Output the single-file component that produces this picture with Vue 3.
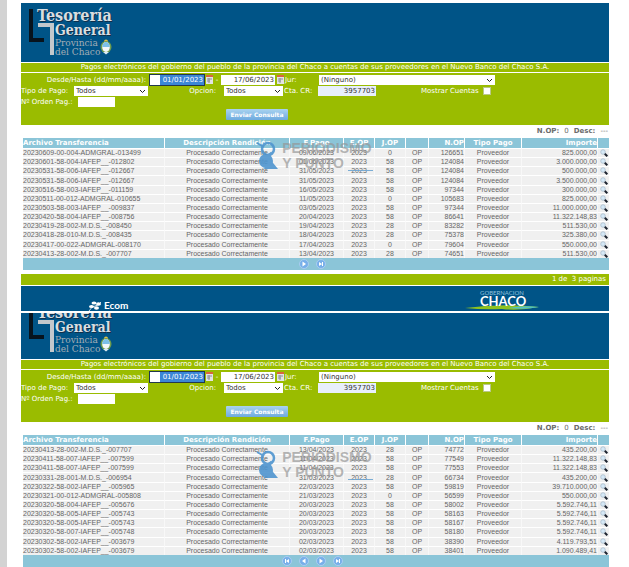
<template>
  <div class="page">
    <main class="content">
      <section v-for="panel in panels" :key="panel.id" class="panel">
        <header class="banner" :class="{ 'banner-cut': panel.cut }">
          <svg class="logo" width="100" height="59" viewBox="0 0 100 59">
            <path d="M10 6V37H23" class="logo-dark" />
            <path d="M17 22H31V52" class="logo-light" />
            <text x="17" y="19" class="logo-shadow logo-top">Tesorería</text>
            <text x="16" y="18" class="logo-name logo-top">Tesorería</text>
            <text x="35" y="33" class="logo-shadow logo-big">General</text>
            <text x="34" y="32" class="logo-name logo-big">General</text>
            <text x="34" y="43" class="logo-small">Provincia</text>
            <text x="34" y="52" class="logo-small">del Chaco</text>
            <circle cx="85" cy="38.500" r="2" fill="#e0c04a" />
            <ellipse cx="85" cy="44" rx="5.500" ry="6" fill="#6f9c4d" />
            <ellipse cx="85" cy="44" rx="3.800" ry="5" fill="#f4f8fa" />
            <path d="M81.200 44a3.800 5 0 0 1 7.600 0z" fill="#7cc0e8" />
            <path d="M82 49l3 2.500 3-2.500z" fill="#dcebf2" />
          </svg>
        </header>

        <h1 class="title">
          Pagos electrónicos del gobierno del pueblo de la provincia del Chaco a cuentas de sus proveedores en el Nuevo Banco del Chaco S.A.
        </h1>

        <form class="filters" @submit.prevent>
          <div class="line">
            <label class="lbl-dates" :for="panel.id + '-desde'">Desde/Hasta (dd/mm/aaaa):</label>
            <input :id="panel.id + '-desde'" class="field date selected" type="text" value="01/01/2023">
            <svg class="calendar" width="7" height="9" viewBox="0 0 7 9">
              <rect y="1" width="7" height="8" fill="#e3e3e3" />
              <rect width="7" height="2" fill="#d8663c" />
              <path d="M1 4h5M1 6h3M3 3v5" stroke="#8b9098" fill="none" />
            </svg>
            <span class="dash">-</span>
            <input class="field date" type="text" value="17/06/2023" aria-label="Hasta">
            <svg class="calendar" width="7" height="9" viewBox="0 0 7 9">
              <rect y="1" width="7" height="8" fill="#e3e3e3" />
              <rect width="7" height="2" fill="#d8663c" />
              <path d="M1 4h5M1 6h3M3 3v5" stroke="#8b9098" fill="none" />
            </svg>
            <label class="lbl-jur" :for="panel.id + '-jur'">Jur:</label>
            <span class="select select-jur">
              <select :id="panel.id + '-jur'"><option>(Ninguno)</option></select>
              <svg class="chevron" width="7" height="5" viewBox="0 0 7 5"><path d="M1 1l2.500 2.500L6 1" /></svg>
            </span>
          </div>
          <div class="line">
            <label class="lbl-tipo" :for="panel.id + '-tipo'">Tipo de Pago:</label>
            <span class="select select-tipo">
              <select :id="panel.id + '-tipo'"><option>Todos</option></select>
              <svg class="chevron" width="7" height="5" viewBox="0 0 7 5"><path d="M1 1l2.500 2.500L6 1" /></svg>
            </span>
            <label class="lbl-opcion" :for="panel.id + '-opcion'">Opcion:</label>
            <span class="select select-opcion">
              <select :id="panel.id + '-opcion'"><option>Todos</option></select>
              <svg class="chevron" width="7" height="5" viewBox="0 0 7 5"><path d="M1 1l2.500 2.500L6 1" /></svg>
            </span>
            <label class="lbl-cta" :for="panel.id + '-cta'">Cta. CR:</label>
            <input :id="panel.id + '-cta'" class="field account" type="text" value="3957703">
            <label class="lbl-mostrar" :for="panel.id + '-mostrar'">Mostrar Cuentas</label>
            <input :id="panel.id + '-mostrar'" class="check" type="checkbox">
          </div>
          <div class="line">
            <label class="lbl-orden" :for="panel.id + '-orden'">Nº Orden Pag.:</label>
            <input :id="panel.id + '-orden'" class="field orden" type="text">
          </div>
          <button class="send" type="submit">Enviar Consulta</button>
        </form>

        <div class="status">
          <b>N.OP:</b><span>0</span><b>Desc:</b><span>---</span>
        </div>

        <div class="results">
          <table>
            <colgroup>
              <col v-for="c in columns" :key="c.key" :class="'col-' + c.key">
            </colgroup>
            <thead>
              <tr>
                <th v-for="c in columns" :key="c.key" :class="c.align">{{ c.label }}</th>
              </tr>
            </thead>
            <tbody>
              <tr v-for="(row, i) in panel.rows" :key="i">
                <td>{{ row[0] }}</td>
                <td class="center">Procesado Correctamente</td>
                <td class="center">{{ row[1] }}</td>
                <td class="center">2023</td>
                <td class="center">{{ row[2] }}</td>
                <td class="center">OP</td>
                <td class="right">{{ row[3] }}</td>
                <td class="center">Proveedor</td>
                <td class="right">{{ row[4] }}</td>
                <td class="center">
                  <svg class="lens" width="8" height="8" viewBox="0 0 8 8">
                    <circle cx="3" cy="3" r="2.300" fill="#d5e8f6" stroke="#a9bccb" stroke-width=".8" />
                    <path d="M4.800 4.800L7.300 7.300" stroke="#1d2430" stroke-width="2" />
                  </svg>
                </td>
              </tr>
            </tbody>
            <tfoot>
              <tr>
                <td colspan="10">
                  <div class="pager">
                    <button v-for="name in panel.pager" :key="name" type="button" :aria-label="name">
                      <svg width="10" height="10" viewBox="0 0 10 10">
                        <circle cx="5" cy="5" r="4.500" fill="#78afe9" stroke="#a9cdf0" />
                        <path :d="pagerIcons[name]" fill="#fff" />
                      </svg>
                    </button>
                  </div>
                </td>
              </tr>
            </tfoot>
          </table>

          <div class="watermark" :class="{ 'watermark-low': panel.cut }">
            <svg width="22" height="29" viewBox="0 0 22 29">
              <path d="M1 2L8 6" stroke="#4f95cf" stroke-width="2" />
              <circle cx="12" cy="8" r="6" fill="none" stroke="#4f95cf" stroke-width="2.500" />
              <path d="M16 12L6 19" stroke="#4f95cf" stroke-width="3" />
              <circle cx="10" cy="20" r="7" fill="#4f95cf" />
              <path d="M13 17l9 11h-14z" fill="#4f95cf" />
            </svg>
            <div class="watermark-text">
              <span>PERIODISMO</span>
              <span class="second">Y PUNTO<i></i></span>
            </div>
          </div>
        </div>

        <template v-if="panel.footer">
          <div class="pages">1 de&nbsp; 3 paginas</div>
          <footer class="footer">
            <svg class="ecom" width="44" height="11" viewBox="0 0 44 11">
              <g fill="#fff">
                <ellipse cx="6" cy="3" rx="2.500" ry="1.500" />
                <ellipse cx="10.500" cy="4" rx="2.500" ry="1.800" />
                <ellipse cx="3.500" cy="6.500" rx="2.500" ry="1.600" />
                <ellipse cx="8.500" cy="8" rx="2.500" ry="1.800" />
              </g>
              <path d="M1 11q3-5 6-5t6-4" fill="none" stroke="#fff" stroke-width=".8" />
              <text x="16" y="9">Ecom</text>
            </svg>
            <svg class="chaco" width="76" height="21" viewBox="0 0 76 21">
              <path d="M1 18Q38 13 75 17Q55 21 38 19Q20 20 1 18z" fill="#8fc31f" />
              <path d="M44 18Q60 15 75 17Q62 20 44 18z" fill="#4fc0c8" />
              <text x="16" y="5" class="gov">GOBERNACION</text>
              <text x="16" y="16" class="name">CHACO</text>
            </svg>
          </footer>
        </template>
      </section>
    </main>
  </div>
</template>

<script setup>
const columns = [
  { key: 'archivo', label: 'Archivo Transferencia', align: 'left' },
  { key: 'desc', label: 'Descripción Rendición', align: 'center' },
  { key: 'fecha', label: 'F.Pago', align: 'center' },
  { key: 'eop', label: 'E.OP', align: 'center' },
  { key: 'jop', label: 'J.OP', align: 'center' },
  { key: 'tipo', label: '', align: 'center' },
  { key: 'nop', label: 'N.OP', align: 'right' },
  { key: 'pago', label: 'Tipo Pago', align: 'center' },
  { key: 'importe', label: 'Importe', align: 'right' },
  { key: 'ver', label: '', align: 'center' },
]

const pagerIcons = {
  Primera: 'M3 3h1v4H3zM7 3v4L4 5z',
  Anterior: 'M6.500 2.500v5L3 5z',
  Siguiente: 'M3.500 2.500v5L7 5z',
  Última: 'M6 3h1v4H6zM3 3v4l3-2z',
}

// archivo, fecha de pago, J.OP, N.OP, importe
const panels = [
  {
    id: 'p1',
    cut: false,
    footer: true,
    pager: ['Siguiente', 'Última'],
    rows: [
      ['20230609-00-004-ADMGRAL-013499', '09/06/2023', '0', '126651', '825.000,00'],
      ['20230601-58-004-IAFEP__-012802', '01/06/2023', '58', '124084', '3.000.000,00'],
      ['20230531-58-006-IAFEP__-012667', '31/05/2023', '58', '124084', '500.000,00'],
      ['20230531-58-006-IAFEP__-012667', '31/05/2023', '58', '124084', '3.500.000,00'],
      ['20230516-58-003-IAFEP__-011159', '16/05/2023', '58', '97344', '300.000,00'],
      ['20230511-00-012-ADMGRAL-010655', '11/05/2023', '0', '105683', '825.000,00'],
      ['20230503-58-003-IAFEP__-009837', '03/05/2023', '58', '97344', '11.000.000,00'],
      ['20230420-58-004-IAFEP__-008756', '20/04/2023', '58', '86641', '11.322.148,83'],
      ['20230419-28-002-M.D.S._-008450', '19/04/2023', '28', '83282', '511.530,00'],
      ['20230418-28-010-M.D.S._-008435', '18/04/2023', '28', '75378', '325.380,00'],
      ['20230417-00-022-ADMGRAL-008170', '17/04/2023', '0', '79604', '550.000,00'],
      ['20230413-28-002-M.D.S._-007707', '13/04/2023', '28', '74651', '511.530,00'],
    ],
  },
  {
    id: 'p2',
    cut: true,
    footer: false,
    pager: ['Primera', 'Anterior', 'Siguiente', 'Última'],
    rows: [
      ['20230413-28-002-M.D.S._-007707', '13/04/2023', '28', '74772', '435.200,00'],
      ['20230411-58-007-IAFEP__-007599', '11/04/2023', '58', '77549', '11.322.148,83'],
      ['20230411-58-007-IAFEP__-007599', '11/04/2023', '58', '77553', '11.322.148,83'],
      ['20230331-28-001-M.D.S._-006954', '31/03/2023', '28', '66734', '435.200,00'],
      ['20230322-58-002-IAFEP__-005965', '22/03/2023', '58', '59819', '39.710.000,00'],
      ['20230321-00-012-ADMGRAL-005808', '21/03/2023', '0', '56599', '550.000,00'],
      ['20230320-58-004-IAFEP__-005676', '20/03/2023', '58', '58002', '5.592.746,11'],
      ['20230320-58-005-IAFEP__-005743', '20/03/2023', '58', '58163', '5.592.746,11'],
      ['20230320-58-005-IAFEP__-005743', '20/03/2023', '58', '58167', '5.592.746,11'],
      ['20230320-58-007-IAFEP__-005748', '20/03/2023', '58', '58180', '5.592.746,11'],
      ['20230302-58-002-IAFEP__-003679', '02/03/2023', '58', '38390', '4.119.793,51'],
      ['20230302-58-002-IAFEP__-003679', '02/03/2023', '58', '38401', '1.090.489,41'],
    ],
  },
]
</script>

<style>
body {
  background: #fff;
}
</style>

<style scoped>
.page {
  min-height: 100vh;
  box-sizing: border-box;
  border-left: 7px solid #d3d3d3;
  font-family: "DejaVu Sans", Verdana, sans-serif;
  font-size: 7px;
  color: #fff;
}

.content {
  padding: 3px 20px 0 14px;
}

.panel + .panel {
  margin-top: 2px;
}

.banner {
  display: flex;
  align-items: flex-end;
  height: 59px;
  overflow: hidden;
  background: #005487;
}

.banner-cut {
  height: 46px;
}

.logo {
  flex: none;
}

.logo-dark {
  fill: none;
  stroke: #07131d;
  stroke-width: 4;
}

.logo-light {
  fill: none;
  stroke: #c3c8cc;
  stroke-width: 4;
}

.logo text {
  font-family: "DejaVu Serif Condensed", "DejaVu Serif", serif;
}

.logo .logo-top {
  font-size: 16px;
  font-weight: bold;
}

.logo .logo-big {
  font-size: 14px;
  font-weight: bold;
}

.logo .logo-small {
  font-size: 10px;
  fill: #a3adb5;
}

.logo-name {
  fill: #d9dde0;
}

.logo-shadow {
  fill: #12304a;
}

.title {
  margin: 1px 0;
  height: 9px;
  line-height: 9px;
  font-size: 7px;
  font-weight: normal;
  text-align: center;
  white-space: nowrap;
  background: #9abc00;
}

.filters {
  display: flex;
  flex-direction: column;
  box-sizing: border-box;
  height: 52px;
  padding-top: 1px;
  background: #9abc00;
}

.line {
  display: flex;
  align-items: center;
  height: 11px;
  white-space: nowrap;
}

.lbl-dates {
  width: 125px;
  margin-right: 4px;
  text-align: right;
}

.lbl-tipo {
  width: 53px;
}

.lbl-opcion {
  width: 68px;
  margin-right: 8px;
  text-align: right;
}

.lbl-jur,
.lbl-cta {
  width: 34px;
  margin-left: 1px;
}

.lbl-mostrar {
  margin-left: 45px;
}

.lbl-orden {
  width: 57px;
}

.field,
.select select {
  box-sizing: border-box;
  height: 10px;
  margin: 0;
  padding: 0 1px;
  border: 0;
  border-radius: 0;
  font: inherit;
  line-height: 9px;
  color: #333;
  background: #fff;
}

.date {
  width: 54px;
  text-align: right;
}

.selected {
  color: #fff;
  background: linear-gradient(to right, #fff 10px, #3b86d6 10px);
  outline: 1px solid #22384d;
}

.calendar {
  margin-left: 2px;
}

.dash {
  width: 8px;
  text-align: center;
}

.select {
  position: relative;
  display: flex;
}

.select select {
  width: 100%;
  padding: 1px 0 0 2px;
  appearance: none;
}

.select-jur {
  width: 176px;
}

.select-tipo {
  width: 74px;
}

.select-opcion {
  width: 59px;
}

.chevron {
  position: absolute;
  top: 3px;
  right: 2px;
  fill: none;
  stroke: #222;
  stroke-width: 1;
}

.account {
  width: 58px;
  text-align: right;
  background: #e8effb;
}

.check {
  width: 8px;
  height: 8px;
  margin: 0 0 0 4px;
  appearance: none;
  background: #fff;
  border: 1px solid #b9c78a;
}

.orden {
  width: 37px;
}

.send {
  align-self: center;
  width: 62px;
  height: 11px;
  margin: 2px 116px 0 0;
  padding: 0;
  border: 0;
  border-radius: 1px;
  font-family: inherit;
  font-size: 6px;
  font-weight: bold;
  line-height: 11px;
  white-space: nowrap;
  color: #fff;
  background: linear-gradient(#a9d3f0, #6eaade);
}

.status {
  display: flex;
  justify-content: flex-end;
  gap: 5px;
  height: 13px;
  line-height: 12px;
  padding-right: 1px;
  color: #6b6b6b;
}

.results {
  position: relative;
  padding: 0 1px 0 2px;
}

table {
  width: 100%;
  height: 132px;
  table-layout: fixed;
  border-collapse: separate;
  border-spacing: 0;
  color: #666;
}

.col-archivo { width: 142px; }
.col-desc { width: 125px; }
.col-fecha { width: 54px; }
.col-eop { width: 31px; }
.col-jop { width: 31px; }
.col-tipo { width: 23px; }
.col-nop { width: 36px; }
.col-pago { width: 57px; }
.col-importe { width: 76px; }
.col-ver { width: 11px; }

th,
td {
  padding: 0;
  line-height: 8px;
  white-space: nowrap;
  text-align: left;
}

th {
  height: 10px;
  font-size: 7px;
  color: #fff;
  background: #8bc5d8;
  border-right: 1px solid #fff;
}

tbody td {
  font-family: "Liberation Sans", Arial, sans-serif;
  font-size: 7px;
  background: #f0f0f0;
  border-top: 1px solid #fff;
  border-right: 1px solid #f8f8f8;
}

th:last-child,
tbody td:last-child {
  border-right: 0;
}

.center {
  text-align: center;
}

.right {
  text-align: right;
}

.lens {
  display: block;
  margin: 0 auto;
}

tfoot td {
  height: 12px;
  background: #8bc5d8;
}

.pager {
  display: flex;
  justify-content: center;
  gap: 7px;
  height: 10px;
  padding-right: 7px;
}

.pager button {
  width: 10px;
  height: 10px;
  padding: 0;
  border: 0;
  background: none;
}

.pager svg {
  display: block;
}

.watermark {
  position: absolute;
  top: 3px;
  left: 40%;
  display: flex;
  gap: 4px;
  opacity: .9;
}

.watermark-low {
  top: 15px;
}

.watermark-text {
  display: flex;
  flex-direction: column;
  font-family: "Liberation Sans", Arial, sans-serif;
  font-size: 14px;
  font-weight: bold;
  line-height: 15px;
  color: rgba(150, 150, 150, .75);
}

.second {
  display: flex;
  align-items: flex-end;
}

.second i {
  width: 25px;
  height: 1px;
  margin-left: 4px;
  background: #6fa6d2;
}

.pages {
  height: 11px;
  margin-top: 4px;
  padding-right: 3px;
  line-height: 11px;
  text-align: right;
  background: #9abc00;
}

.footer {
  display: flex;
  align-items: flex-end;
  justify-content: space-between;
  height: 25px;
  margin-top: 1px;
  padding: 0 69px 0 67px;
  background: #005487;
}

.footer text {
  font-family: Lato, "Open Sans", sans-serif;
  fill: #fff;
}

.ecom text {
  font-size: 10px;
  font-weight: bold;
}

.chaco .gov {
  font-size: 6px;
  fill: #8fc0dc;
}

.chaco .name {
  font-size: 13px;
  font-weight: bold;
}
</style>
